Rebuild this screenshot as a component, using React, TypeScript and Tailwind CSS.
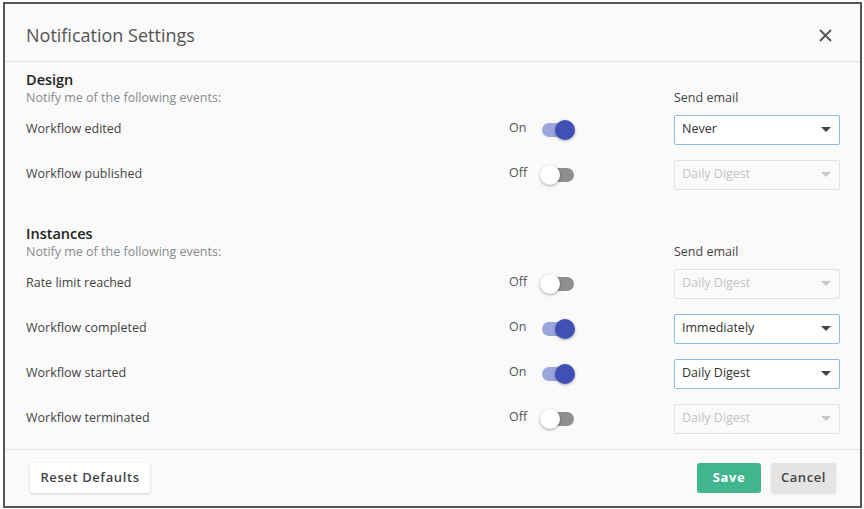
type Row = { label: string; on: boolean; value: string };

const design: Row[] = [
  { label: "Workflow edited", on: true, value: "Never" },
  { label: "Workflow published", on: false, value: "Daily Digest" },
];

const instances: Row[] = [
  { label: "Rate limit reached", on: false, value: "Daily Digest" },
  { label: "Workflow completed", on: true, value: "Immediately" },
  { label: "Workflow started", on: true, value: "Daily Digest" },
  { label: "Workflow terminated", on: false, value: "Daily Digest" },
];

function Toggle({ on }: { on: boolean }) {
  return (
    <div className="relative w-[34px] h-[20px] flex items-center">
      <div className={on ? "w-[32px] h-[14px] rounded-full bg-[#9ba6dc]" : "w-[32px] h-[14px] rounded-full bg-[#8f8f8f]"}></div>
      <div
        className={
          on
            ? "absolute right-[1px] top-0 w-[20px] h-[20px] rounded-full bg-[#3f51b5] shadow-[0_1px_3px_rgba(0,0,0,0.35)]"
            : "absolute left-[-2px] top-0 w-[20px] h-[20px] rounded-full bg-white shadow-[0_1px_3px_rgba(0,0,0,0.35)]"
        }
      ></div>
    </div>
  );
}

function Select({ on, value }: { on: boolean; value: string }) {
  return (
    <div
      className={
        on
          ? "w-[166px] h-[30px] flex items-center justify-between pl-[7px] pr-[8px] rounded-[2px] border border-[#8fbbe9] bg-white text-[#333]"
          : "w-[166px] h-[30px] flex items-center justify-between pl-[7px] pr-[8px] rounded-[2px] border border-[#e2e2e2] bg-[#fafafa] text-[#c4c4c4]"
      }
    >
      <span className="text-[12.5px]">{value}</span>
      <svg width="10" height="5" viewBox="0 0 10 5">
        <path d="M0 0 L10 0 L5 5 Z" fill={on ? "#444" : "#c8c8c8"} />
      </svg>
    </div>
  );
}

function Section({ title, rows }: { title: string; rows: Row[] }) {
  return (
    <div className="flex flex-col">
      <h3 className="text-[14.5px] leading-[18px] font-semibold text-[#222]">{title}</h3>
      <div className="flex justify-between items-center h-[18px]">
        <p className="text-[12.5px] text-[#8a8a8a]">Notify me of the following events:</p>
        <p className="w-[166px] text-[12.5px] text-[#444]">Send email</p>
      </div>
      {rows.map((r) => (
        <div key={r.label} className="flex items-center h-[45px]">
          <span className="flex-1 text-[12.5px] text-[#444]">{r.label}</span>
          <span className="w-[33px] text-[12.5px] text-[#555] -mt-[2px]">{r.on ? "On" : "Off"}</span>
          <Toggle on={r.on} />
          <div className="w-[98px]"></div>
          <Select on={r.on} value={r.value} />
        </div>
      ))}
    </div>
  );
}

export default function App() {
  return (
    <div className="w-[864px] h-[509px] bg-white pt-[2px] pl-[3px]" style={{ fontFamily: '"Open Sans", sans-serif' }}>
      <div className="w-[859px] h-[506px] border-2 border-[#555] bg-[#fafafa] flex flex-col">
        <div className="h-[58px] flex items-center justify-between pt-[6px] pl-[21px] pr-[28px] border-b border-[#e3e3e3]">
          <h2 className="text-[18px] text-[#555]">Notification Settings</h2>
          <svg width="13" height="13" viewBox="0 0 13 13">
            <path d="M1 1 L12 12 M12 1 L1 12" stroke="#555" strokeWidth="1.8" />
          </svg>
        </div>
        <div className="flex-1 flex flex-col pl-[21px] pr-[20px] pt-[9px] gap-[28px] border-b border-[#e3e3e3]">
          <Section title="Design" rows={design} />
          <Section title="Instances" rows={instances} />
        </div>
        <div className="h-[56px] flex items-center justify-between pl-[25px] pr-[24px]">
          <button className="w-[120px] h-[30px] rounded-[3px] bg-white shadow-[0_1px_3px_rgba(0,0,0,0.18)] text-[13px] font-semibold tracking-[0.6px] text-[#444]">
            Reset Defaults
          </button>
          <div className="flex gap-[10px]">
            <button className="w-[64px] h-[30px] rounded-[3px] bg-[#3fb68b] text-[13px] font-bold tracking-[0.6px] text-white">
              Save
            </button>
            <button className="w-[65px] h-[30px] rounded-[3px] bg-[#e4e4e4] shadow-[0_1px_2px_rgba(0,0,0,0.12)] text-[13px] font-semibold tracking-[0.6px] text-[#444]">
              Cancel
            </button>
          </div>
        </div>
      </div>
    </div>
  );
}
